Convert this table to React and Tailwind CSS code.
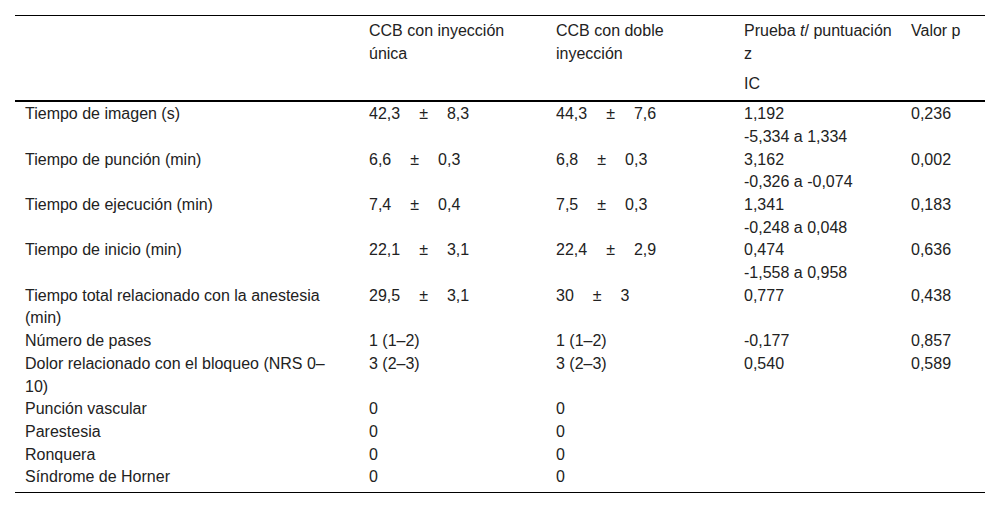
import React from "react";

const PM = ({ a, b }) => (
  <span className="inline-flex gap-[19px]">
    <span>{a}</span>
    <span>±</span>
    <span>{b}</span>
  </span>
);

const rows = [
  { l: "Tiempo de imagen (s)", c2: <PM a="42,3" b="8,3" />, c3: <PM a="44,3" b="7,6" />, c4: ["1,192", "-5,334 a 1,334"], c5: "0,236" },
  { l: "Tiempo de punción (min)", c2: <PM a="6,6" b="0,3" />, c3: <PM a="6,8" b="0,3" />, c4: ["3,162", "-0,326 a -0,074"], c5: "0,002" },
  { l: "Tiempo de ejecución (min)", c2: <PM a="7,4" b="0,4" />, c3: <PM a="7,5" b="0,3" />, c4: ["1,341", "-0,248 a 0,048"], c5: "0,183" },
  { l: "Tiempo de inicio (min)", c2: <PM a="22,1" b="3,1" />, c3: <PM a="22,4" b="2,9" />, c4: ["0,474", "-1,558 a 0,958"], c5: "0,636" },
  { l: "Tiempo total relacionado con la anestesia (min)", c2: <PM a="29,5" b="3,1" />, c3: <PM a="30" b="3" />, c4: ["0,777"], c5: "0,438" },
  { l: "Número de pases", c2: "1 (1–2)", c3: "1 (1–2)", c4: ["-0,177"], c5: "0,857" },
  { l: "Dolor relacionado con el bloqueo (NRS 0–10)", c2: "3 (2–3)", c3: "3 (2–3)", c4: ["0,540"], c5: "0,589" },
  { l: "Punción vascular", c2: "0", c3: "0", c4: [], c5: "" },
  { l: "Parestesia", c2: "0", c3: "0", c4: [], c5: "" },
  { l: "Ronquera", c2: "0", c3: "0", c4: [], c5: "" },
  { l: "Síndrome de Horner", c2: "0", c3: "0", c4: [], c5: "" },
];

export default function App() {
  return (
    <div className="bg-white w-[1000px] h-[509px] pt-[15px] pl-[15px] text-[#222] text-[16px] leading-[22.7px]" style={{ fontFamily: '"Liberation Sans", Arial, sans-serif' }}>
      <table className="w-[970px] table-fixed border-collapse border-t border-t-black border-b border-b-black">
        <colgroup>
          <col className="w-[344px]" />
          <col className="w-[187px]" />
          <col className="w-[188px]" />
          <col className="w-[167px]" />
          <col className="w-[84px]" />
        </colgroup>
        <thead>
          <tr className="align-top">
            <th className="font-normal text-left pl-[10px] pr-[20px] pt-[4px] pb-[4px]"></th>
            <th className="font-normal text-left pl-[10px] pr-[10px] pt-[4px] pb-[4px]">CCB con inyección única</th>
            <th className="font-normal text-left pl-[10px] pr-[10px] pt-[4px] pb-[4px]">CCB con doble inyección</th>
            <th className="font-normal text-left pl-[10px] pr-[8px] pt-[4px] pb-[4px]">Prueba <i>t</i>/ puntuación z</th>
            <th className="font-normal text-left pl-[10px] pr-[4px] pt-[4px] pb-[4px]">Valor p</th>
          </tr>
          <tr className="align-top border-b-2 border-b-black">
            <th className="pt-[4px] pb-[4px]"></th>
            <th></th>
            <th></th>
            <th className="font-normal text-left pl-[10px] pr-[8px] pt-[4px] pb-[4px]">IC</th>
            <th></th>
          </tr>
        </thead>
        <tbody>
          {rows.map((r, i) => {
            const py = i === 0 ? "pt-[1px]" : i === rows.length - 1 ? "pb-[3px]" : "";
            return (
              <tr key={i} className="align-top">
                <td className={`pl-[10px] pr-[20px] ${py}`}>{r.l}</td>
                <td className={`pl-[10px] pr-[10px] ${py}`}>{r.c2}</td>
                <td className={`pl-[10px] pr-[10px] ${py}`}>{r.c3}</td>
                <td className={`pl-[10px] pr-[8px] ${py}`}>
                  {r.c4.map((t, j) => (
                    <div key={j}>{t}</div>
                  ))}
                </td>
                <td className={`pl-[10px] pr-[4px] ${py}`}>{r.c5}</td>
              </tr>
            );
          })}
        </tbody>
      </table>
    </div>
  );
}
